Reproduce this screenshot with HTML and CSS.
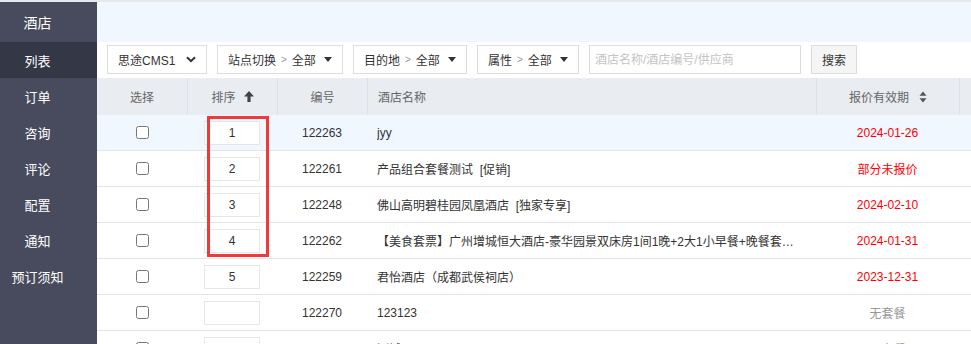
FILE: index.html
```html
<!DOCTYPE html>
<html lang="zh-CN">
<head>
<meta charset="utf-8">
<title>酒店列表</title>
<link rel="stylesheet" href="styles.css">
</head>
<body>
<div class="page">
  <aside class="sidebar">
    <div class="brand"><span>酒店</span></div>
    <div class="nav-item active"><span>列表</span></div>
    <div class="nav-item"><span>订单</span></div>
    <div class="nav-item"><span>咨询</span></div>
    <div class="nav-item"><span>评论</span></div>
    <div class="nav-item"><span>配置</span></div>
    <div class="nav-item"><span>通知</span></div>
    <div class="nav-item"><span>预订须知</span></div>
  </aside>
  <main class="main">
    <div class="topband"></div>
    <div class="toolbar">
      <div class="select sel-cms">思途CMS1
        <svg class="chev" width="10" height="7" viewBox="0 0 10 7"><path d="M1 1.2 L5 5.2 L9 1.2" fill="none" stroke="#333" stroke-width="2"/></svg>
      </div>
      <div class="select sel-site">站点切换<span class="gt">&gt;</span>全部<span class="tri"></span></div>
      <div class="select sel-dest">目的地<span class="gt">&gt;</span>全部<span class="tri"></span></div>
      <div class="select sel-attr">属性<span class="gt">&gt;</span>全部<span class="tri"></span></div>
      <input class="search" type="text" placeholder="酒店名称/酒店编号/供应商">
      <button class="btn">搜索</button>
    </div>
    <div class="table">
      <div class="row head">
        <div class="c c-sel">选择</div>
        <div class="c c-sort">排序
          <svg class="up" width="10" height="11" viewBox="0 0 10 11"><path d="M5 0 L10 5.5 L6.6 5.5 L6.6 11 L3.4 11 L3.4 5.5 L0 5.5 Z" fill="#444"/></svg>
        </div>
        <div class="c c-id">编号</div>
        <div class="c c-name">酒店名称</div>
        <div class="c c-date">报价有效期
          <svg class="ud" width="8" height="12" viewBox="0 0 8 12"><path d="M4 0.5 L7.5 4.8 L0.5 4.8 Z M4 11.5 L7.5 7.2 L0.5 7.2 Z" fill="#555"/></svg>
        </div>
        <div class="c c-end"></div>
      </div>
      <div class="row hl">
        <div class="c c-sel"><input type="checkbox"></div>
        <div class="c c-sort"><input class="ord" type="text" value="1"></div>
        <div class="c c-id">122263</div>
        <div class="c c-name"><span class="txt">jyy</span></div>
        <div class="c c-date red">2024-01-26</div>
        <div class="c c-end"></div>
      </div>
      <div class="row">
        <div class="c c-sel"><input type="checkbox"></div>
        <div class="c c-sort"><input class="ord" type="text" value="2"></div>
        <div class="c c-id">122261</div>
        <div class="c c-name"><span class="txt">产品组合套餐测试 &nbsp;[促销]</span></div>
        <div class="c c-date red">部分未报价</div>
        <div class="c c-end"></div>
      </div>
      <div class="row">
        <div class="c c-sel"><input type="checkbox"></div>
        <div class="c c-sort"><input class="ord" type="text" value="3"></div>
        <div class="c c-id">122248</div>
        <div class="c c-name"><span class="txt">佛山高明碧桂园凤凰酒店 &nbsp;[独家专享]</span></div>
        <div class="c c-date red">2024-02-10</div>
        <div class="c c-end"></div>
      </div>
      <div class="row">
        <div class="c c-sel"><input type="checkbox"></div>
        <div class="c c-sort"><input class="ord" type="text" value="4"></div>
        <div class="c c-id">122262</div>
        <div class="c c-name"><span class="txt">【美食套票】广州增城恒大酒店-豪华园景双床房1间1晚+2大1小早餐+晚餐套票（含温泉门票及儿童乐园）</span></div>
        <div class="c c-date red">2024-01-31</div>
        <div class="c c-end"></div>
      </div>
      <div class="row">
        <div class="c c-sel"><input type="checkbox"></div>
        <div class="c c-sort"><input class="ord" type="text" value="5"></div>
        <div class="c c-id">122259</div>
        <div class="c c-name"><span class="txt">君怡酒店（成都武侯祠店）</span></div>
        <div class="c c-date red">2023-12-31</div>
        <div class="c c-end"></div>
      </div>
      <div class="row">
        <div class="c c-sel"><input type="checkbox"></div>
        <div class="c c-sort"><input class="ord" type="text" value=""></div>
        <div class="c c-id">122270</div>
        <div class="c c-name"><span class="txt">123123</span></div>
        <div class="c c-date gray">无套餐</div>
        <div class="c c-end"></div>
      </div>
      <div class="row">
        <div class="c c-sel"><input type="checkbox"></div>
        <div class="c c-sort"><input class="ord" type="text" value=""></div>
        <div class="c c-id">122269</div>
        <div class="c c-name"><span class="txt">测试</span></div>
        <div class="c c-date gray">无套餐</div>
        <div class="c c-end"></div>
      </div>
    </div>
  </main>
  <div class="mark"></div>
</div>
</body>
</html>
```
FILE: styles.css
```css
* { box-sizing: border-box; }
html, body { margin: 0; padding: 0; }
body {
  width: 971px;
  height: 344px;
  overflow: hidden;
  font-family: "Liberation Sans", "Noto Sans CJK SC", sans-serif;
  font-size: 12px;
  color: #333;
  background: #fff;
}
.page {
  position: relative;
  display: flex;
  border-top: 2px solid #e6e8ec;
  height: 344px;
}
.sidebar {
  width: 97px;
  flex: none;
  background: #474b5d;
  color: #fff;
}
.brand, .nav-item {
  display: flex;
  align-items: center;
  padding-right: 22px;
}
.brand span, .nav-item span {
  flex: 1;
  text-align: center;
}
.brand {
  height: 40px;
  font-size: 14px;
}
.nav-item {
  height: 36px;
  font-size: 13px;
}
.nav-item.active { background: #333746; }

.main {
  flex: 1;
  min-width: 0;
}
.topband {
  height: 40px;
  background: #f0f7ff;
}
.toolbar {
  height: 36px;
  display: flex;
  align-items: flex-start;
  gap: 10px;
  padding: 3px 10px 0 10px;
  background: #fff;
}
.select {
  height: 29px;
  border: 1px solid #dcdcdc;
  background: #fff;
  display: flex;
  align-items: center;
  padding: 0 10px;
  font-size: 12px;
  color: #333;
  white-space: nowrap;
}
.sel-cms { width: 100px; }
.sel-cms .chev { margin-left: auto; }
.sel-site { width: 126px; }
.sel-dest { width: 114px; }
.sel-attr { width: 102px; }
.gt {
  color: #999;
  font-size: 10px;
  margin: 0 5px;
}
.tri {
  margin-left: auto;
  width: 0;
  height: 0;
  border-left: 4.5px solid transparent;
  border-right: 4.5px solid transparent;
  border-top: 5px solid #333;
}
.search {
  width: 212px;
  height: 29px;
  border: 1px solid #dcdcdc;
  padding: 0 5px;
  font-family: inherit;
  font-size: 12px;
  outline: none;
}
.search::placeholder { color: #c4c4c4; }
.btn {
  width: 46px;
  height: 29px;
  border: 1px solid #dcdcdc;
  background: #f5f5f5;
  font-family: inherit;
  font-size: 12px;
  color: #333;
  padding: 0;
}

.table { width: 874px; }
.row {
  display: flex;
  height: 36px;
  border-bottom: 1px solid #e3e5ec;
}
.row.head {
  height: 37px;
  background: #e9ecf1;
  color: #666;
  border-bottom: 0;
}
.row.hl { background: #f0f7ff; }
.c {
  display: flex;
  align-items: center;
  justify-content: center;
  flex: none;
  min-width: 0;
}
.head .c + .c { border-left: 1px solid #dde0e6; }
.c-sel { width: 90px; }
.c-sort { width: 90px; }
.c-id { width: 90px; }
.c-name {
  width: 449px;
  justify-content: flex-start;
  padding: 0 18px 0 10px;
}
.c-date { width: 143px; }
.c-end { flex: 1; }
.txt {
  display: block;
  white-space: nowrap;
  overflow: hidden;
  text-overflow: ellipsis;
  max-width: 100%;
}
.up { margin-left: 8px; }
.ud { margin-left: 10px; }
.red { color: #f00; }
.gray { color: #999; }
input[type="checkbox"] {
  width: 13px;
  height: 13px;
  margin: 0;
}
.ord {
  width: 56px;
  height: 24px;
  border: 1px solid #e6e6e6;
  background: #fff;
  text-align: center;
  font-family: inherit;
  font-size: 12px;
  color: #333;
  padding: 0;
  outline: none;
}
.mark {
  position: absolute;
  left: 207px;
  top: 114px;
  width: 62px;
  height: 141px;
  border: 3px solid #f03a3a;
  pointer-events: none;
}
```
